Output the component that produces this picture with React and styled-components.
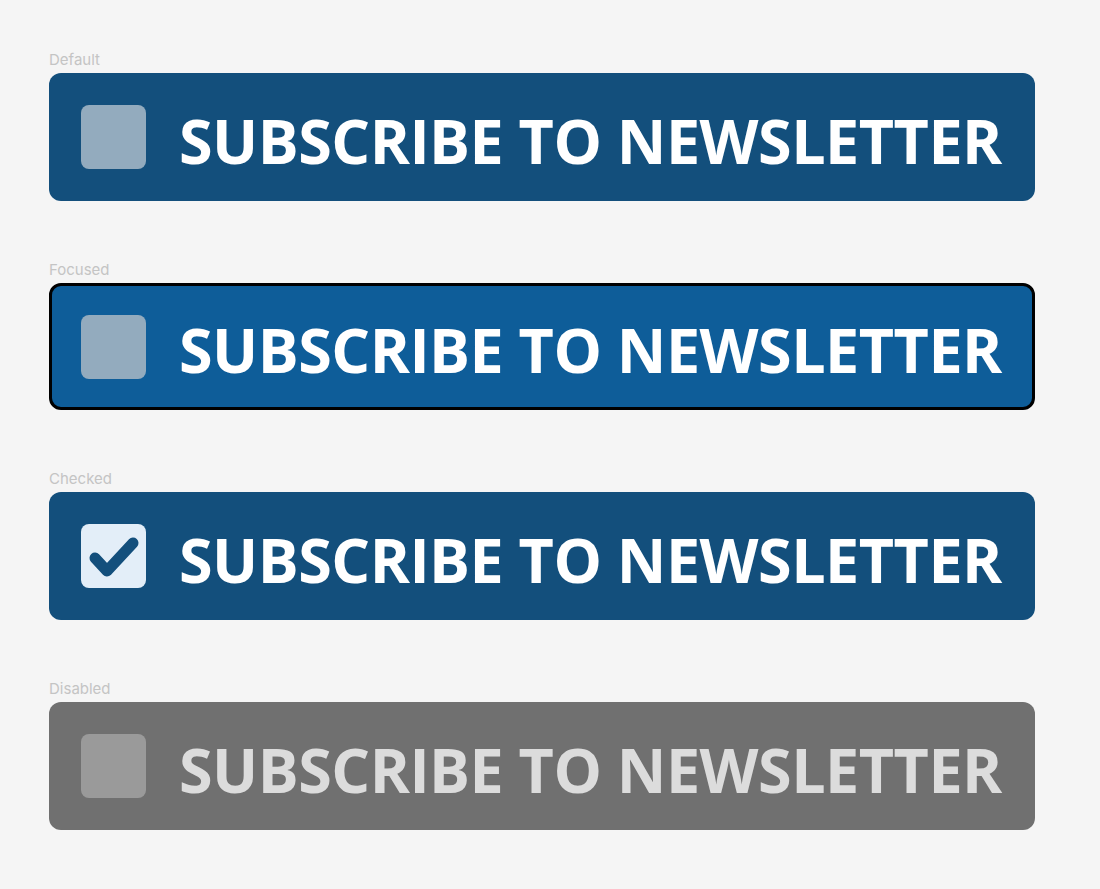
import styled, { createGlobalStyle } from 'styled-components';

const GlobalStyle = createGlobalStyle`
  body {
    margin: 0;
    background: #f5f5f5;
    font-family: "Inter", "Liberation Sans", sans-serif;
  }
`;

const Page = styled.div`
  width: 986px;
  padding: 51px 49px 40px;
  display: flex;
  flex-direction: column;
  gap: 60px;
`;

const Section = styled.section`
  display: flex;
  flex-direction: column;
  gap: 4px;
`;

const Label = styled.span`
  font-size: 15px;
  line-height: 18px;
  color: #c4c4c4;
`;

const palette = {
  default: { bg: '#134f7c', box: '#93abbe', text: '#ffffff' },
  focused: { bg: '#0e5d99', box: '#93abbe', text: '#ffffff' },
  checked: { bg: '#134f7c', box: '#e3eef8', text: '#ffffff' },
  disabled: { bg: '#707070', box: '#9a9a9a', text: '#dcdcdc' },
};

const Card = styled.label`
  box-sizing: border-box;
  height: ${(p) => (p.$state === 'focused' ? '127px' : '128px')};
  display: flex;
  align-items: center;
  gap: 33px;
  padding: 0 32px;
  border-radius: 12px;
  background: ${(p) => palette[p.$state].bg};
  border: ${(p) => (p.$state === 'focused' ? '3px solid #000' : 'none')};
  padding-left: ${(p) => (p.$state === 'focused' ? '29px' : '32px')};
  cursor: ${(p) => (p.$state === 'disabled' ? 'not-allowed' : 'pointer')};
`;

const Box = styled.span`
  flex: none;
  width: 65px;
  height: 64px;
  border-radius: 8px;
  background: ${(p) => palette[p.$state].box};
  display: flex;
  align-items: center;
  justify-content: center;
`;

const Text = styled.span`
  font-family: "Open Sans", "Noto Sans", sans-serif;
  font-weight: 700;
  font-size: 61px;
  letter-spacing: -0.5px;
  line-height: 1;
  padding-top: 6px;
  white-space: nowrap;
  color: ${(p) => palette[p.$state].text};
`;

const Check = () => (
  <svg width="65" height="64" viewBox="0 0 65 64">
    <path
      d="M14 34 L26 47 L52 19"
      fill="none"
      stroke="#134f7c"
      strokeWidth="11"
      strokeLinecap="round"
      strokeLinejoin="round"
    />
  </svg>
);

const states = [
  { key: 'default', label: 'Default' },
  { key: 'focused', label: 'Focused' },
  { key: 'checked', label: 'Checked' },
  { key: 'disabled', label: 'Disabled' },
];

export default function App() {
  return (
    <>
      <GlobalStyle />
      <Page>
        {states.map((s) => (
          <Section key={s.key}>
            <Label>{s.label}</Label>
            <Card $state={s.key}>
              <Box $state={s.key}>{s.key === 'checked' && <Check />}</Box>
              <Text $state={s.key}>SUBSCRIBE TO NEWSLETTER</Text>
            </Card>
          </Section>
        ))}
      </Page>
    </>
  );
}
